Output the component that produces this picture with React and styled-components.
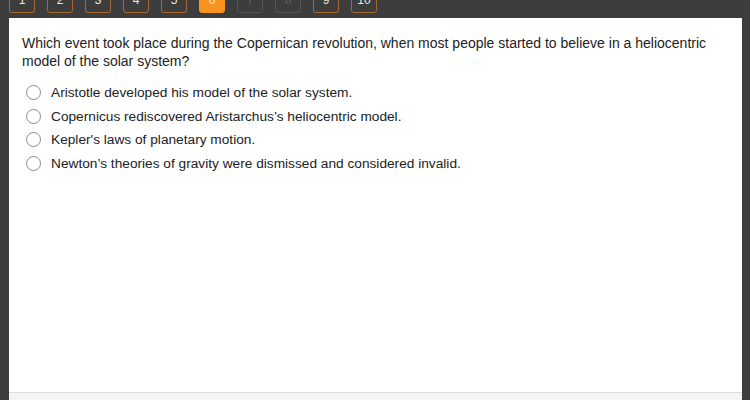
import styled, { createGlobalStyle } from 'styled-components';

const GlobalStyle = createGlobalStyle`
  html, body {
    margin: 0;
    padding: 0;
    background: #3d3d3d;
    font-family: "Liberation Sans", Arial, Helvetica, sans-serif;
  }
`;

const pages = [1, 2, 3, 4, 5, 6, 7, 8, 9, 10];
const current = 6;
const locked = [7, 8];

const answers = [
  'Aristotle developed his model of the solar system.',
  'Copernicus rediscovered Aristarchus\u2019s heliocentric model.',
  "Kepler's laws of planetary motion.",
  'Newton\u2019s theories of gravity were dismissed and considered invalid.',
];

export default function App() {
  return (
    <>
      <GlobalStyle />
      <Page>
        <Pager>
          {pages.map((n) => (
            <PageButton
              key={n}
              $active={n === current}
              $disabled={locked.includes(n)}
            >
              {n}
            </PageButton>
          ))}
        </Pager>
        <Card>
          <Body>
            <Question>
              Which event took place during the Copernican revolution, when most people started to believe in a heliocentric
              model of the solar system?
            </Question>
            <Options>
              {answers.map((text) => (
                <Option key={text}>
                  <Radio />
                  <span>{text}</span>
                </Option>
              ))}
            </Options>
          </Body>
          <Footer />
        </Card>
      </Page>
    </>
  );
}

const Page = styled.div`
  box-sizing: border-box;
  width: 750px;
  height: 400px;
  padding: 0 8px 0 9px;
  overflow: hidden;
  display: flex;
  flex-direction: column;
`;

const Pager = styled.nav`
  display: flex;
  gap: 12px;
  margin-top: -13px;
  height: 26px;
`;

const PageButton = styled.div`
  box-sizing: border-box;
  width: 26px;
  height: 26px;
  border-radius: 3px;
  display: flex;
  align-items: center;
  justify-content: center;
  font-size: 12px;
  border: 1px solid
    ${(p) => (p.$active ? '#f7931e' : p.$disabled ? '#555555' : '#a86a2c')};
  background: ${(p) => (p.$active ? '#f7931e' : 'transparent')};
  color: ${(p) => (p.$active ? '#ffe7cc' : p.$disabled ? '#5e5e5e' : '#e8e8e8')};
`;

const Card = styled.div`
  margin-top: 5px;
  flex: 1;
  background: #ffffff;
  display: flex;
  flex-direction: column;
`;

const Body = styled.div`
  flex: 1;
  padding: 16px 13px 0;
  color: #222222;
`;

const Question = styled.p`
  margin: 0;
  font-size: 14px;
  line-height: 18px;
`;

const Options = styled.div`
  margin-top: 11px;
  display: flex;
  flex-direction: column;
`;

const Option = styled.label`
  display: flex;
  align-items: center;
  gap: 10px;
  height: 23.5px;
  font-size: 13.7px;
  padding-left: 4px;
`;

const Radio = styled.span`
  box-sizing: border-box;
  width: 15px;
  height: 15px;
  border-radius: 50%;
  border: 1px solid #8a8a8a;
  background: #fff;
  flex-shrink: 0;
`;

const Footer = styled.div`
  height: 7px;
  border-top: 1px solid #dcdcdc;
  background: #f4f4f4;
`;
